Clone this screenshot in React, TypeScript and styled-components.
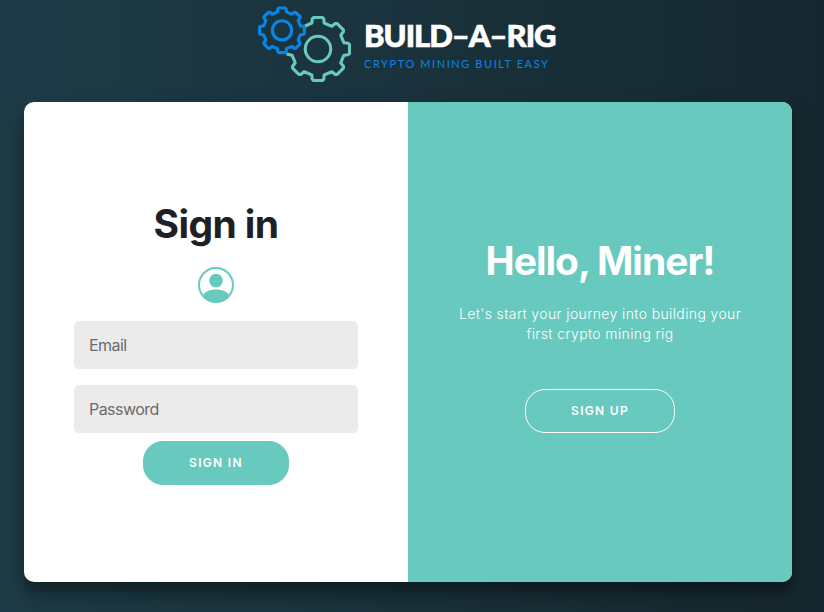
import React from "react";
import styled, { createGlobalStyle } from "styled-components";

const TEAL = "#68c9be";
const BLUE = "#0786e6";

const GlobalStyle = createGlobalStyle`
  * { box-sizing: border-box; }
  html, body { margin: 0; height: 100%; }
  body {
    font-family: Inter, "Liberation Sans", sans-serif;
    background: linear-gradient(to right, #1e3c48, #16282f);
    overflow: hidden;
  }
`;

const Page = styled.div`
  height: 612px;
  display: flex;
  flex-direction: column;
  padding: 0 32px 30px 24px;
`;

const Header = styled.header`
  height: 102px;
  display: flex;
  align-items: flex-start;
  padding-left: 226px;
`;

const Gears = styled.svg`
  display: block;
  flex: none;
`;

const Brand = styled.div`
  padding: 16px 0 0 4px;
  display: flex;
  flex-direction: column;
  white-space: nowrap;
`;

const BrandName = styled.div`
  font: 900 31px/38px Lato, sans-serif;
  letter-spacing: -1px;
  -webkit-text-stroke: 0.7px #fff;
  color: #fff;
`;

const Tagline = styled.div`
  font: 400 11px/14px Lato, sans-serif;
  letter-spacing: 1.58px;
  margin-top: 3px;
  color: ${BLUE};
`;

const Card = styled.main`
  height: 480px;
  display: grid;
  grid-template-columns: 1fr 1fr;
  border-radius: 10px;
  overflow: hidden;
  background: #fff;
  box-shadow: 0 14px 28px rgba(0, 0, 0, 0.25), 0 10px 10px rgba(0, 0, 0, 0.22);
`;

const Form = styled.form`
  display: flex;
  flex-direction: column;
  align-items: center;
  padding: 98px 50px 0;
`;

const Welcome = styled.section`
  display: flex;
  flex-direction: column;
  align-items: center;
  padding: 135px 40px 0;
  background: ${TEAL};
  color: #fff;
  text-align: center;
`;

const Title = styled.h1<{ $color: string; $tracking: string }>`
  margin: 0;
  font-size: 39px;
  line-height: 48px;
  font-weight: 700;
  letter-spacing: ${(p) => p.$tracking};
  white-space: nowrap;
  color: ${(p) => p.$color};
`;

const Avatar = styled.svg`
  display: block;
  margin: 19px 0 18px;
`;

const Field = styled.input`
  width: 100%;
  height: 48px;
  padding: 0 15px;
  border: 0;
  border-radius: 5px;
  background: #ebebeb;
  font: 400 16px Inter, sans-serif;
  letter-spacing: -0.55px;
  outline: none;
  & + & { margin-top: 16px; }
  &::placeholder { color: #6c6c6c; opacity: 1; }
`;

const Blurb = styled.p`
  margin: 19px 0 45px;
  font-size: 14px;
  line-height: 20px;
  font-weight: 300;
  letter-spacing: 0.37px;
`;

const Button = styled.button<{ $outlined?: boolean }>`
  width: ${(p) => (p.$outlined ? 150 : 146)}px;
  height: 44px;
  margin-top: ${(p) => (p.$outlined ? 0 : 8)}px;
  padding: 0 0 2px;
  border: 1px solid ${(p) => (p.$outlined ? "#fff" : TEAL)};
  border-radius: 20px;
  background: ${TEAL};
  color: #fff;
  font: 600 12px Inter, sans-serif;
  letter-spacing: 1.3px;
`;

type Point = [number, number];

// Outline of one cog tooth, clockwise, as points round (cx, cy).
function tooth(cx: number, cy: number, k: number, angle: number): Point[] {
  const shape: Point[] = [
    [24.5, -9.5], [26, -6.2], [30.2, -5.8], [31.5, -4.4],
    [31.5, 4.4], [30.2, 5.8], [26, 6.2], [24.5, 9.5],
  ];
  const a = (angle * Math.PI) / 180;
  return shape.map(([x, y]) => [
    cx + k * (x * Math.cos(a) - y * Math.sin(a)),
    cy + k * (x * Math.sin(a) + y * Math.cos(a)),
  ]);
}

const line = (points: Point[]) =>
  "M" + points.map((p) => p.map((n) => n.toFixed(2)).join(" ")).join("L");

const blueGear =
  line([0, 45, 90, 135, 180, 225, 270, 315].flatMap((a) => tooth(282, 30.3, 0.71, a))) + "Z";

const tealGear = line([
  [304.5, 26.5],
  ...[270, 315, 360, 405, 450, 495].flatMap((a) => tooth(318, 49, 1, a)),
  [292, 55.2],
  [286.5, 54],
]);

export default function App() {
  return (
    <>
      <GlobalStyle />
      <Page>
        <Header>
          <Gears width="110" height="90" viewBox="250 0 110 90" fill="none" strokeWidth="3.1" strokeLinejoin="round">
            <path d={tealGear} stroke={TEAL} />
            <circle cx="318" cy="49" r="12.7" stroke={TEAL} />
            <path d={blueGear} stroke={BLUE} />
            <circle cx="282" cy="30.3" r="9.6" stroke={BLUE} />
          </Gears>
          <Brand>
            <BrandName>BUILD–A–RIG</BrandName>
            <Tagline>CRYPTO MINING BUILT EASY</Tagline>
          </Brand>
        </Header>
        <Card>
          <Form>
            <Title $color="#1d2125" $tracking="-0.6px">Sign in</Title>
            <Avatar width="36" height="36" viewBox="0 0 36 36">
              <defs>
                <clipPath id="face"><circle cx="18" cy="18" r="17" /></clipPath>
              </defs>
              <circle cx="18" cy="18" r="17" fill="none" stroke={TEAL} strokeWidth="2" />
              <circle cx="18" cy="13.6" r="6.8" fill={TEAL} />
              <path d="M4 29C7 24.5 12 22.5 18 22.5S29 24.5 32 29V36H4Z" fill={TEAL} clipPath="url(#face)" />
            </Avatar>
            <Field type="email" placeholder="Email" />
            <Field type="password" placeholder="Password" />
            <Button type="button">SIGN IN</Button>
          </Form>
          <Welcome>
            <Title $color="#fff" $tracking="-1px">Hello, Miner!</Title>
            <Blurb>Let's start your journey into building your first crypto mining rig</Blurb>
            <Button type="button" $outlined>SIGN UP</Button>
          </Welcome>
        </Card>
      </Page>
    </>
  );
}
